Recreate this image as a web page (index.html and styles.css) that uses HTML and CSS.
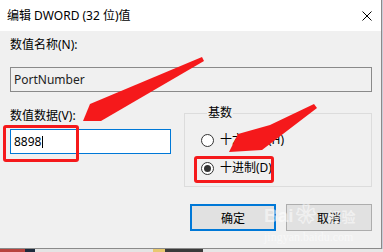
FILE: index.html
```html
<!DOCTYPE html>
<html lang="zh-CN">
<head>
    <meta charset="UTF-8">
    <title>编辑 DWORD (32 位)值</title>
    <link rel="stylesheet" href="styles.css">
</head>
<body>

    <div class="dialog">
        <!-- Title bar -->
        <div class="titlebar">
            <span class="title">编辑 DWORD (32 位)值</span>
            <svg class="close" width="10" height="10" viewBox="0 0 10 10">
                <path d="M0.5 0.5 L9.5 9.5 M9.5 0.5 L0.5 9.5" stroke="#000" stroke-width="1" fill="none"/>
            </svg>
        </div>

        <div class="content">
            <div class="lbl">数值名称(N):</div>
            <div class="field readonly">PortNumber</div>

            <div class="row">
                <div class="col-left">
                    <div class="lbl">数值数据(V):</div>
                    <div class="field value">8898<span class="caret"></span></div>
                </div>
                <fieldset class="base">
                    <legend>基数</legend>
                    <div class="radio"><span class="circle"></span>十六进制(H)</div>
                    <div class="radio checked"><span class="circle"></span>十进制(D)</div>
                </fieldset>
            </div>

            <div class="buttons">
                <button class="btn primary">确定</button>
                <button class="btn">取消</button>
            </div>
        </div>
    </div>

    <!-- strip of the taskbar below the dialog -->
    <div class="taskbar">
        <span class="tb-red"></span><span class="tb-dark"></span><span class="tb-light"></span><span class="tb-yellow"></span><span class="tb-text"></span>
    </div>

    <!-- red marks drawn over the screenshot -->
    <div class="mark mark-value"></div>
    <div class="mark mark-dec"></div>
    <svg class="arrows" width="383" height="252" viewBox="0 0 383 252">
        <polygon points="83,121 90,104 202,57 204,61 101,121" fill="#f5191b"/>
        <polygon points="229,152 238,134 270,125 314,104 317,108 262,150" fill="#f5191b"/>
    </svg>

    <!-- watermark -->
    <div class="watermark">
        <div class="wm-logo">Bai<span class="wm-paw">❀</span><span class="wm-cn">经验</span></div>
        <div class="wm-url">jingyan.baidu.com</div>
    </div>

</body>
</html>
```

FILE: styles.css
```css
body { margin: 0; width: 383px; height: 252px; overflow: hidden; position: relative; background: #c9cdd8; font-family: "Noto Sans", "Noto Sans CJK SC", sans-serif; font-size: 12px; color: #000; }
.dialog { width: 381px; height: 248px; background: #f0f0f0; border-right: 1px solid #8a8a8a; border-bottom: 1px solid #8a8a8a; }

.titlebar { height: 31px; background: #fff; display: flex; align-items: center; justify-content: space-between; padding: 0 9px 0 7px; }
.title { line-height: 16px; }
.close { display: block; }

.content { padding: 6px 9px 0 10px; }
.lbl { line-height: 16px; height: 16px; }
.field { box-sizing: border-box; height: 25px; border: 1px solid #8a8a8a; padding-left: 3px; line-height: 23px; }
.readonly { margin-top: 14px; color: #222; }

.row { display: flex; align-items: flex-start; margin-top: 13px; }
.col-left { width: 161px; padding-top: 3px; }
.value { margin-top: 5px; background: #fff; border-color: #0078d7; display: flex; align-items: center; }
.caret { display: inline-block; width: 1px; height: 12px; background: #000; margin-left: 1px; }

.base { box-sizing: border-box; width: 188px; height: 82px; margin: 0 0 0 13px; padding: 1px 0 0 16px; border: 1px solid #dcdcdc; }
.base legend { padding: 0 1px; margin-left: 6px; line-height: 16px; }
.radio { display: flex; align-items: center; height: 20px; line-height: 20px; margin-top: 8px; }
.radio + .radio { margin-top: 8px; }
.circle { box-sizing: border-box; width: 13px; height: 13px; border: 1px solid #333; border-radius: 50%; background: #fff; margin-right: 6px; display: flex; align-items: center; justify-content: center; }
.checked .circle::after { content: ""; width: 7px; height: 7px; border-radius: 50%; background: #333; }

.buttons { display: flex; justify-content: flex-end; gap: 10px; margin-top: 17px; }
.btn { box-sizing: border-box; width: 86px; height: 27px; background: #e1e1e1; border: 1px solid #adadad; font: inherit; color: #000; padding: 0; }
.btn.primary { border: 2px solid #0078d7; }

.taskbar { display: flex; height: 3px; background: #e6e6e6; }
.tb-red { width: 25px; background: #b8433e; }
.tb-dark { width: 10px; background: #1d2a3c; }
.tb-light { width: 118px; background: #e4e4e4; }
.tb-yellow { width: 12px; background: #e8c870; }
.tb-text { width: 38px; background: #3a3a3a; }

.mark { position: absolute; border: 3px solid #f5191b; border-radius: 3px; }
.mark-value { left: 3px; top: 125px; width: 70px; height: 31px; }
.mark-dec { left: 194px; top: 156px; width: 74px; height: 21px; }
.arrows { position: absolute; left: 0; top: 0; pointer-events: none; }

.watermark { position: absolute; left: 264px; top: 204px; color: rgba(255, 255, 255, 0.5); pointer-events: none; }
.wm-logo { font-family: "Liberation Sans", sans-serif; font-weight: bold; font-size: 19px; line-height: 22px; }
.wm-paw { font-size: 20px; margin: 0 2px; }
.wm-cn { font-family: "Noto Sans CJK SC", sans-serif; font-size: 14px; margin-left: 10px; }
.wm-url { font-family: "Liberation Serif", serif; font-size: 12px; line-height: 14px; margin-top: 3px; }
```
